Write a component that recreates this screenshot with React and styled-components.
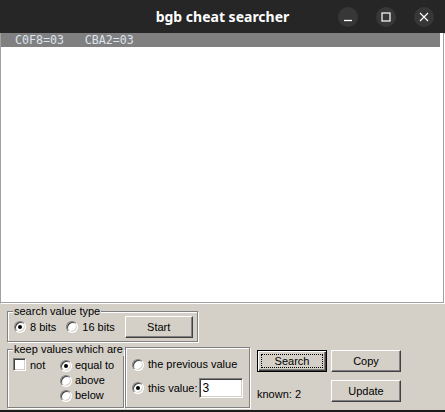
import React from "react";
import styled, { createGlobalStyle, css } from "styled-components";

const GlobalStyle = createGlobalStyle`
  html, body {
    margin: 0;
    padding: 0;
    background: #d4d0c8;
  }
  * {
    box-sizing: border-box;
  }
`;

const ui = `11px "Liberation Sans", Arial, sans-serif`;

const Window = styled.div`
  width: 445px;
  height: 412px;
  display: flex;
  flex-direction: column;
  overflow: hidden;
`;

const TitleBar = styled.div`
  height: 33px;
  flex: none;
  background: #262626;
  display: grid;
  grid-template-columns: 1fr auto 1fr;
  align-items: center;
`;

const Title = styled.div`
  grid-column: 2;
  color: #fff;
  font: 700 14px "Noto Sans", "DejaVu Sans", sans-serif;
`;

const Controls = styled.div`
  grid-column: 3;
  justify-self: end;
  display: flex;
  gap: 18px;
  padding-right: 11px;
`;

const CtlButton = styled.div`
  width: 20px;
  height: 20px;
  border-radius: 50%;
  background: #373737;
  display: flex;
  align-items: center;
  justify-content: center;
  svg {
    display: block;
  }
`;

const Body = styled.div`
  flex: 1;
  display: flex;
  flex-direction: column;
  background: #d4d0c8;
  border-bottom: 2px solid #1c1c1c;
`;

const ListBox = styled.div`
  width: 444px;
  height: 270px;
  flex: none;
  background: #fff;
  border-left: 1px solid #a0a0a0;
  border-right: 1px solid #a0a0a0;
  border-bottom: 1px solid #a0a0a0;
  box-shadow: 1px 1px 0 #fff;
`;

const ListRow = styled.div`
  height: 14px;
  margin-right: 3px;
  padding-left: 14px;
  background: ${(p) => (p.$selected ? "#808080" : "transparent")};
  color: ${(p) => (p.$selected ? "#dde3ee" : "#000")};
  font: 11.6px/14px "DejaVu Sans Mono", "Liberation Mono", monospace;
  white-space: pre;
`;

const Panel = styled.div`
  flex: 1;
  padding: 8px 0 0 7px;
  display: flex;
  flex-direction: column;
  font: ${ui};
  color: #000;
`;

const Group = styled.div`
  position: relative;
  width: ${(p) => p.$w}px;
  height: ${(p) => p.$h}px;
  margin-top: ${(p) => p.$top || 0}px;
  margin-left: ${(p) => p.$left || 0}px;
  border: 1px solid #808080;
  box-shadow: 1px 1px 0 #fff, inset 1px 1px 0 #fff;
  flex: none;
`;

const Caption = styled.span`
  position: absolute;
  top: -7px;
  left: 5px;
  padding: 0 1px;
  background: #d4d0c8;
  line-height: 13px;
  white-space: nowrap;
`;

const TypeRow = styled.div`
  display: flex;
  align-items: center;
  gap: 10px;
  height: 100%;
  padding: 1px 0 0 6px;
`;

const Option = styled.label`
  display: flex;
  align-items: center;
  gap: ${(p) => p.$gap ?? 4}px;
  height: ${(p) => p.$h || 15}px;
  line-height: 15px;
  white-space: nowrap;
`;

const RadioDot = styled.span`
  flex: none;
  width: 12px;
  height: 12px;
  border-radius: 50%;
  border: 1px solid;
  border-color: #808080 #fff #fff #808080;
  box-shadow: inset 1px 1px 0 #404040, inset -1px -1px 0 #d4d0c8;
  background: #fff;
  display: flex;
  align-items: center;
  justify-content: center;
  &::after {
    content: "";
    width: 4px;
    height: 4px;
    border-radius: 50%;
    background: ${(p) => (p.$checked ? "#000" : "transparent")};
  }
`;

const CheckBox = styled.span`
  flex: none;
  width: 13px;
  height: 13px;
  margin-top: -2px;
  border: 1px solid;
  border-color: #808080 #fff #fff #808080;
  box-shadow: inset 1px 1px 0 #404040, inset -1px -1px 0 #d4d0c8;
  background: #fff;
`;

const Button = styled.button`
  position: relative;
  width: ${(p) => p.$w || 70}px;
  height: 22px;
  padding: 0 0 1px;
  margin: 0;
  font: ${ui};
  color: #000;
  background: #d4d0c8;
  border: 1px solid;
  border-color: #fff #404040 #404040 #fff;
  box-shadow: inset -1px -1px 0 #808080;
  ${(p) =>
    p.$default &&
    css`
      border-color: #000;
      box-shadow: inset 1px 1px 0 #fff, inset -1px -1px 0 #404040,
        inset -2px -2px 0 #808080;
      &::after {
        content: "";
        position: absolute;
        inset: 3px;
        border: 1px dotted #000;
      }
    `}
`;

const LowerRow = styled.div`
  display: flex;
  align-items: flex-start;
  margin-top: 5px;
`;

const KeepBody = styled.div`
  display: flex;
  padding: 8px 0 0 5px;
`;

const NotCol = styled.div`
  width: 47px;
`;

const Stack = styled.div`
  display: flex;
  flex-direction: column;
`;

const CompareBody = styled.div`
  display: flex;
  flex-direction: column;
  gap: 6px;
  padding: 9px 0 0 6px;
`;

const ValueInput = styled.input`
  width: 44px;
  height: 20px;
  margin: 0 0 0 -3px;
  padding: 0 3px;
  font: 12px "Liberation Sans", Arial, sans-serif;
  color: #000;
  background: #fff;
  border: 1px solid;
  border-color: #808080 #fff #fff #808080;
  box-shadow: inset 1px 1px 0 #404040, inset -1px -1px 0 #d4d0c8;
  outline: none;
`;

const Actions = styled.div`
  display: grid;
  grid-template-columns: 70px 70px;
  column-gap: 4px;
  row-gap: 8px;
  margin: 3px 0 0 7px;
`;

const Known = styled.span`
  align-self: end;
  padding-bottom: 1px;
  line-height: 13px;
`;

function Radio({ checked, label, gap }) {
  return (
    <Option $gap={gap}>
      <RadioDot $checked={checked} />
      {label}
    </Option>
  );
}

export default function App() {
  return (
    <>
      <GlobalStyle />
      <Window>
        <TitleBar>
          <Title>bgb cheat searcher</Title>
          <Controls>
            <CtlButton>
              <svg width="10" height="10" viewBox="0 0 10 10">
                <path d="M1 8.5h8" stroke="#fff" strokeWidth="1.3" />
              </svg>
            </CtlButton>
            <CtlButton>
              <svg width="10" height="10" viewBox="0 0 10 10">
                <rect x="1" y="1" width="8" height="8" fill="none" stroke="#fff" strokeWidth="1.2" />
              </svg>
            </CtlButton>
            <CtlButton>
              <svg width="10" height="10" viewBox="0 0 10 10">
                <path d="M1 1l8 8M9 1l-8 8" stroke="#fff" strokeWidth="1.2" />
              </svg>
            </CtlButton>
          </Controls>
        </TitleBar>
        <Body>
          <ListBox>
            <ListRow $selected>{"C0F8=03   CBA2=03"}</ListRow>
          </ListBox>
          <Panel>
            <Group $w={191} $h={31}>
              <Caption>search value type</Caption>
              <TypeRow>
                <Radio checked label="8 bits" />
                <Radio label="16 bits" />
                <Button $w={68}>Start</Button>
              </TypeRow>
            </Group>
            <LowerRow>
              <Group $w={117} $h={59} $top={2}>
                <Caption>keep values which are</Caption>
                <KeepBody>
                  <NotCol>
                    <Option>
                      <CheckBox />
                      not
                    </Option>
                  </NotCol>
                  <Stack>
                    <Radio checked label="equal to" gap={3} />
                    <Radio label="above" gap={3} />
                    <Radio label="below" gap={3} />
                  </Stack>
                </KeepBody>
              </Group>
              <Group $w={125} $h={61} $left={1}>
                <CompareBody>
                  <Radio label="the previous value" />
                  <Option $h={20}>
                    <RadioDot $checked />
                    this value:
                    <ValueInput defaultValue="3" />
                  </Option>
                </CompareBody>
              </Group>
              <Actions>
                <Button $default>Search</Button>
                <Button>Copy</Button>
                <Known>known: 2</Known>
                <Button>Update</Button>
              </Actions>
            </LowerRow>
          </Panel>
        </Body>
      </Window>
    </>
  );
}
